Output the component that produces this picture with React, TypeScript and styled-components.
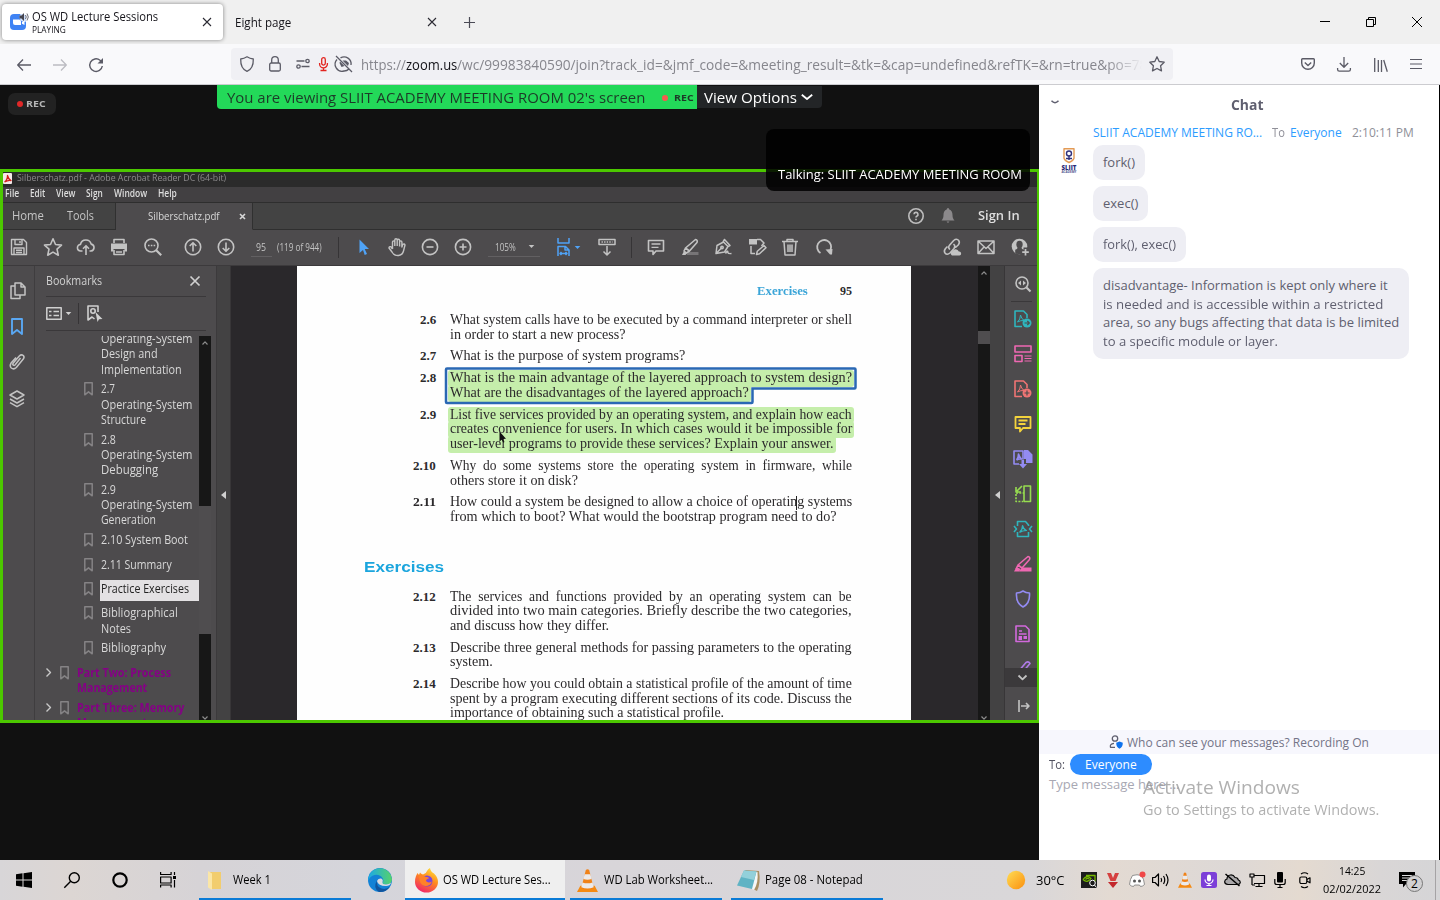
import React, { useLayoutEffect, useRef, useState } from "react";
import styled, { createGlobalStyle } from "styled-components";

const Global = createGlobalStyle`
  * { box-sizing: border-box; }
  html, body { margin: 0; padding: 0; overflow: hidden; }
  body { font-family: "Open Sans", "Noto Sans", sans-serif; background: #111; }
  svg { display: block; flex: none; overflow: visible; }
`;

/* ---------- text that is condensed or extended to a set width ---------- */

const FitBox = styled.span<{ $w: number; $ml?: number }>`
  display: block;
  flex: none;
  width: ${(p) => p.$w}px;
  margin-left: ${(p) => p.$ml ?? 0}px;
  white-space: nowrap;
`;
const FitInner = styled.span`
  display: inline-block;
  transform-origin: 0 50%;
  white-space: pre;
`;

function Fit({ w, ml, children, className }: { w: number; ml?: number; children: React.ReactNode; className?: string }) {
  const ref = useRef<HTMLSpanElement>(null);
  const [k, setK] = useState(1);
  useLayoutEffect(() => {
    if (ref.current) setK(w / ref.current.offsetWidth);
  }, [w]);
  return (
    <FitBox $w={w} $ml={ml} className={className}>
      <FitInner ref={ref} style={{ transform: `scaleX(${k})` }}>{children}</FitInner>
    </FitBox>
  );
}

const Text = styled(Fit)<{ $s?: number; $c?: string; $b?: number; $lh?: number; $mt?: number }>`
  font-size: ${(p) => p.$s ?? 12}px;
  color: ${(p) => p.$c ?? "inherit"};
  font-weight: ${(p) => p.$b ?? 400};
  line-height: ${(p) => p.$lh ?? 16}px;
  margin-top: ${(p) => p.$mt ?? 0}px;
`;

/* ---------- icon frame ---------- */

const Svg = styled.svg<{ $ml?: number; $mt?: number }>`
  margin-left: ${(p) => p.$ml ?? 0}px;
  margin-top: ${(p) => p.$mt ?? 0}px;
  fill: none;
  stroke: currentColor;
  stroke-linejoin: round;
`;

type IconProps = { w?: number; h?: number; vb?: string; ml?: number; mt?: number; sw?: number; color?: string; children: React.ReactNode };
function Icon({ w = 18, h, vb, ml, mt, sw = 1.6, color, children }: IconProps) {
  const hh = h ?? w;
  return (
    <Svg width={w} height={hh} viewBox={vb ?? `0 0 ${w} ${hh}`} $ml={ml} $mt={mt} strokeWidth={sw} color={color}>
      {children}
    </Svg>
  );
}
const solid = { fill: "currentColor", stroke: "none" };

/* ---------- browser ---------- */

const Page = styled.div`
  width: 1440px;
  height: 900px;
  display: flex;
  flex-direction: column;
`;
const TabStrip = styled.div`
  height: 44px;
  flex: none;
  display: flex;
  align-items: center;
  background: #f0f0f0;
  color: #15141a;
`;
const ActiveTab = styled.div`
  width: 221px;
  height: 36px;
  margin-left: 2px;
  padding: 0 12px 0 8px;
  display: flex;
  align-items: center;
  background: #fff;
  border-radius: 4px;
  box-shadow: 0 0 4px rgba(0, 0, 0, 0.45);
`;
const TabTitles = styled.div`
  margin-left: 2px;
  padding-top: 2px;
  flex: 1;
`;
const OtherTab = styled.div`
  width: 223px;
  padding: 0 10px 0 12px;
  display: flex;
  align-items: center;
  justify-content: space-between;
`;
const NewTab = styled.div`
  margin-left: 18px;
  padding-top: 1px;
`;
const WindowButtons = styled.div`
  margin-left: auto;
  padding-right: 18px;
  display: flex;
  align-items: center;
  gap: 36px;
`;
const NavBar = styled.div`
  height: 41px;
  flex: none;
  display: flex;
  align-items: center;
  background: #f9f9fb;
  border-bottom: 1px solid #ccccd0;
  color: #5b5b66;
`;
const UrlBar = styled.div`
  width: 942px;
  height: 32px;
  margin-left: 128px;
  display: flex;
  align-items: center;
  background: #f0f0f4;
  border-radius: 4px;
`;
const UrlText = styled.div`
  width: 781px;
  height: 22px;
  margin-left: 9px;
  padding-top: 2px;
  display: flex;
  overflow: hidden;
  mask-image: linear-gradient(to right, #000 745px, transparent 781px);
`;

const TabClose = ({ c = "#2b2a33" }: { c?: string }) => (
  <Icon w={8} color={c} sw={1.1}><path d="M0 0l8 8M8 0l-8 8" /></Icon>
);

function Browser() {
  return (
    <>
      <TabStrip>
        <ActiveTab>
          <Icon w={20} h={18} sw={0}>
            <rect x="0" y="1" width="16" height="16" rx="4" fill="#3f83f4" />
            <path d="M3 6.500h6a2 2 0 0 1 2 2v3.500H5a2 2 0 0 1-2-2zM12 9l2.500-1.500v4.500L12 10.700z" fill="#fff" />
            <circle cx="14.500" cy="4" r="5" fill="#fff" opacity=".75" />
            <path d="M9.500 2.500h2L14 0v8l-2.500-2.500h-2z" fill="#45454f" />
            <path d="M15.500 2q1.500 2 0 4M17 .5q2.600 3.500 0 7" stroke="#6b6b76" strokeWidth="1" />
          </Icon>
          <TabTitles>
            <Text w={126} $s={12} $lh={14}>OS WD Lecture Sessions</Text>
            <Text w={34} $s={8.8} $lh={13}>PLAYING</Text>
          </TabTitles>
          <TabClose />
        </ActiveTab>
        <OtherTab>
          <Text w={56} $s={12} $mt={2}>Eight page</Text>
          <TabClose />
        </OtherTab>
        <NewTab><Icon w={11} color="#4a4a55" sw={1.2}><path d="M5.500 0v11M0 5.500h11" /></Icon></NewTab>
        <WindowButtons>
          <Icon w={10} sw={1} color="#000"><path d="M0 4.500h10" /></Icon>
          <Icon w={10} sw={1} color="#000"><path d="M.5 2.500h7v7h-7zM2.500 2.500v-2h7v7h-2" /></Icon>
          <Icon w={10} sw={1} color="#000"><path d="M0 0l10 10M10 0L0 10" /></Icon>
        </WindowButtons>
      </TabStrip>
      <NavBar>
        <Icon w={14} h={12} ml={17} mt={1} sw={1.3}><path d="M14 6H.8M6 .5L.7 6 6 11.500" /></Icon>
        <Icon w={14} h={12} ml={22} mt={1} sw={1.3} color="#bcbcc2"><path d="M0 6h13.200M8 .5L13.300 6 8 11.500" /></Icon>
        <Icon w={14} h={14} ml={22} mt={1} sw={1.4}>
          <path d="M13.300 8A6.300 6.300 0 1 1 11 2.200l1 .8" /><path d="M14 0v5.500H8.500z" {...solid} />
        </Icon>
        <UrlBar>
          <Icon w={14} h={16} ml={9} sw={1.3}><path d="M7 .8c2 1.300 4 2 6.300 2.200C13.500 9.500 11.500 13.500 7 15.300 2.500 13.500.5 9.500.7 3 3 2.800 5 2.100 7 .8z" /></Icon>
          <Icon w={12} h={16} ml={15} sw={1.3}><rect x=".7" y="7" width="10.600" height="8" rx="1.500" /><path d="M2.700 7V4a3.300 3.300 0 0 1 6.600 0v3" /></Icon>
          <Icon w={14} h={10} ml={15} sw={1.3}><circle cx="11.500" cy="2" r="1.700" /><circle cx="2.500" cy="7.500" r="1.700" /><path d="M.5 2h8M5.500 7.500h8" /></Icon>
          <Icon w={9} h={14} ml={9} sw={1.3} color="#e2231e">
            <rect x="2.700" y=".6" width="3.600" height="7.500" rx="1.800" /><path d="M.6 6v1a3.900 3.900 0 0 0 7.800 0V6M4.500 11v2.500M1.500 13.500h6" />
          </Icon>
          <Icon w={16} h={16} ml={8} sw={1.3}>
            <path d="M1 3.500A7 7 0 0 0 8 15a7 7 0 0 0 5-2M15 9A7 7 0 0 0 4.500 1.900" /><path d="M0 0l16 16" />
            <path d="M3.500 7l2 4 3-1-4.500-4.500zM6.500 4.500L12 10l1-3-3-2.500z" {...solid} />
          </Icon>
          <UrlText>
            <Text w={45} $s={14} $lh={20} $c="#86868d">https://</Text>
            <Text w={51} $s={14} $lh={20} $c="#15141a">zoom.us</Text>
            <Text w={690} $s={14} $lh={20} $c="#86868d">/wc/99983840590/join?track_id=&amp;jmf_code=&amp;meeting_result=&amp;tk=&amp;cap=undefined&amp;refTK=&amp;rn=true&amp;po=78</Text>
          </UrlText>
          <Icon w={16} h={16} ml={7} sw={1.3}><path d="M8 .8l2.200 4.700 5 .7-3.600 3.600.9 5.100L8 12.500l-4.500 2.400.9-5.100L.8 6.200l5-.7z" /></Icon>
        </UrlBar>
        <Icon w={14} h={13} ml={128} sw={1.4}><path d="M1.500.7h11c.5 0 .8.300.8.800V5a6.300 6.300 0 0 1-12.600 0V1.500c0-.5.300-.8.800-.8z" /><path d="M3.800 4.500L7 7.500l3.200-3" /></Icon>
        <Icon w={14} h={15} ml={22} sw={1.3}><path d="M7 0v10M2.800 6L7 10.200 11.200 6M.6 11v1.500c0 1 .6 1.700 1.700 1.700h9.400c1 0 1.700-.7 1.700-1.700V11" /></Icon>
        <Icon w={14} h={14} ml={23} mt={1} sw={1.3}><path d="M.7 0v14M4.300 2v12M7.500 2v12M9.700 2l3.600 11.700" /></Icon>
        <Icon w={12} h={11} ml={22} sw={1.2}><path d="M0 .5h12M0 5h12M0 9.500h12" /></Icon>
      </NavBar>
    </>
  );
}

/* ---------- meeting stage ---------- */

const Main = styled.div`
  height: 775px;
  display: flex;
  background: #111;
`;
const Stage = styled.div`
  width: 1039px;
  flex: none;
  position: relative;
  display: flex;
  flex-direction: column;
`;
const StageTop = styled.div`
  height: 84px;
  flex: none;
  display: flex;
  align-items: flex-start;
`;
const RecBadge = styled.div`
  width: 48px;
  height: 22px;
  margin: 8px 0 0 8px;
  padding-left: 9px;
  display: flex;
  align-items: center;
  background: #222;
  border-radius: 7px;
`;
const Dot = styled.span<{ $s: number; $c: string; $ml?: number }>`
  width: ${(p) => p.$s}px;
  height: ${(p) => p.$s}px;
  margin-left: ${(p) => p.$ml ?? 0}px;
  border-radius: 50%;
  background: ${(p) => p.$c};
`;
const Banner = styled.div`
  width: 480px;
  height: 24px;
  margin-left: 161px;
  padding: 1px 0 0 10px;
  display: flex;
  align-items: center;
  background: #23d959;
  border-radius: 0 0 0 4px;
`;
const ViewOptions = styled.div`
  width: 125px;
  height: 22px;
  margin-top: 1px;
  padding: 1px 0 0 7px;
  display: flex;
  align-items: center;
  background: #232527;
  border-radius: 0 0 4px 0;
`;
const Talking = styled.div`
  position: absolute;
  left: 766px;
  top: 44px;
  width: 264px;
  height: 62px;
  padding: 0 0 7px 12px;
  display: flex;
  align-items: flex-end;
  background: rgba(0, 0, 0, 0.85);
  border-radius: 8px;
`;
const Share = styled.div`
  height: 554px;
  flex: none;
  display: flex;
  flex-direction: column;
  border: solid #4cc800;
  border-width: 3px 2px 3px 3px;
  background: #4d4b4d;
  color: #d8d8d8;
`;
const TitleBar = styled.div`
  height: 15px;
  flex: none;
  padding-bottom: 3px;
  display: flex;
  align-items: center;
  background: #2b2b2b;
`;
const MenuBar = styled.div`
  height: 16px;
  flex: none;
  padding-bottom: 1px;
  display: flex;
  align-items: center;
  background: #424042;
  border-bottom: 1px solid #2e2e2e;
`;
const DocTabs = styled.div`
  height: 27px;
  flex: none;
  display: flex;
  align-items: stretch;
  background: #434343;
`;
const TabCell = styled.div<{ $w?: number; $on?: boolean }>`
  width: ${(p) => p.$w}px;
  flex: none;
  display: flex;
  align-items: center;
  background: ${(p) => (p.$on ? "#4d4b4d" : "transparent")};
  border-bottom: 1px solid ${(p) => (p.$on ? "#4d4b4d" : "#2f2f2f")};
  border-right: 1px solid #303030;
`;
const TabsEnd = styled.div`
  flex: 1;
  padding-right: 17px;
  display: flex;
  align-items: center;
  justify-content: flex-end;
  border-bottom: 1px solid #2f2f2f;
`;
const ToolRow = styled.div`
  height: 36px;
  flex: none;
  padding: 0 8px 1px 0;
  display: flex;
  align-items: center;
  border-bottom: 1px solid #3c3a3c;
  color: #c3c3c3;
`;
const Field = styled.div<{ $w: number }>`
  width: ${(p) => p.$w}px;
  height: 20px;
  margin-left: 16px;
  padding-left: 5px;
  display: flex;
  align-items: center;
  border-bottom: 1px solid #626062;
`;
const VLine = styled.div<{ $ml: number; $h?: number }>`
  width: 1px;
  height: ${(p) => p.$h ?? 21}px;
  margin-left: ${(p) => p.$ml}px;
  background: #363436;
`;
const Gap = styled.div`
  flex: 1;
`;
const Body = styled.div`
  flex: 1;
  min-height: 0;
  display: flex;
`;
const LeftRail = styled.div`
  width: 32px;
  flex: none;
  display: flex;
  flex-direction: column;
  border-right: 1px solid #3f3d3f;
  color: #c3c3c3;
`;
const Panel = styled.div`
  width: 182px;
  flex: none;
  display: flex;
  flex-direction: column;
  border-right: 1px solid #3c3a3c;
`;
const PanelHead = styled.div<{ $h: number }>`
  height: ${(p) => p.$h}px;
  flex: none;
  width: 160px;
  margin-left: 11px;
  display: flex;
  align-items: center;
  border-bottom: 1px solid #3a383a;
  color: #d0d0d0;
`;
const PanelBody = styled.div`
  flex: 1;
  min-height: 0;
  margin-top: 5px;
  display: flex;
`;
const Tree = styled.div`
  width: 164px;
  flex: none;
  overflow: hidden;
  display: flex;
  flex-direction: column;
`;
const TreeList = styled.div`
  margin-top: -5px;
  display: flex;
  flex-direction: column;
  gap: 4.4px;
`;
const Node = styled.div<{ $indent: number }>`
  flex: none;
  min-height: 20px;
  padding-left: ${(p) => p.$indent}px;
  display: flex;
  align-items: flex-start;
`;
const NodeLines = styled.div<{ $sel?: boolean; $ml: number }>`
  margin-left: ${(p) => p.$ml}px;
  ${(p) =>
    p.$sel &&
    `background: #e3e1e3; color: #222; height: 21px; margin-top: -1px; margin-bottom: -1px; padding-top: 1px;
     flex: 1; box-shadow: -1px 0 #e3e1e3;`}
`;
const Scroll = styled.div<{ $w: number }>`
  width: ${(p) => p.$w}px;
  flex: none;
  display: flex;
  flex-direction: column;
  align-items: center;
  background: #171717;
  color: #8c8c8c;
`;
const Thumb = styled.div<{ $mt: number; $h: number }>`
  width: 100%;
  height: ${(p) => p.$h}px;
  margin-top: ${(p) => p.$mt}px;
  margin-bottom: auto;
  background: #4f4d4f;
`;
const Strip = styled.div<{ $w: number }>`
  width: ${(p) => p.$w}px;
  flex: none;
  padding-top: 3px;
  display: flex;
  align-items: center;
  justify-content: center;
  background: #434243;
  border-right: 1px solid #383638;
`;
const Canvas = styled.div`
  flex: 1;
  display: flex;
  padding-left: 66px;
  background: #2a282b;
`;
const Paper = styled.div`
  position: relative;
  width: 614px;
  flex: none;
  overflow: hidden;
  background: #fefefe;
  color: #2c2a2c;
  font-family: "Liberation Serif", serif;
`;
const RunningHead = styled.div`
  height: 47px;
  padding: 3px 59px 0 460px;
  display: flex;
  align-items: center;
  justify-content: space-between;
`;
const Exercises = styled.div`
  display: flex;
  flex-direction: column;
  gap: 7.3px;
`;
const Exercise = styled.div`
  flex: none;
  display: flex;
`;
const Num = styled.div`
  width: 139px;
  margin-right: 14px;
  display: flex;
  justify-content: flex-end;
`;
const Line = styled.div<{ $w: number; $hl?: boolean }>`
  width: ${(p) => p.$w}px;
  border-radius: 2px;
  background: ${(p) => (p.$hl ? "#c5eeab" : "none")};
  box-shadow: ${(p) => (p.$hl ? "-1px 0 0 1px #c5eeab, 1px 0 0 1px #c5eeab" : "none")};
`;
const Lines = styled.div`
  position: relative;
`;
const SectionTitle = styled.div`
  padding: 33px 0 14px 67px;
  font-family: "Liberation Sans", sans-serif;
`;
const Overlay = styled.svg<{ $x: number; $y: number }>`
  position: absolute;
  left: ${(p) => p.$x}px;
  top: ${(p) => p.$y}px;
`;
const RightRail = styled.div`
  width: 32px;
  flex: none;
  display: flex;
  flex-direction: column;
  color: #c3c3c3;
`;
const RailTools = styled.div`
  height: 402px;
  flex: none;
  overflow: hidden;
  display: flex;
  flex-direction: column;
  align-items: center;
`;
const RailCell = styled.div<{ $h: number; $dark?: boolean }>`
  width: 100%;
  height: ${(p) => p.$h}px;
  flex: none;
  display: flex;
  align-items: center;
  justify-content: center;
  padding-left: 3px;
  background: ${(p) => (p.$dark ? "#3b393b" : "none")};
`;
const RailRule = styled.div`
  width: 21px;
  height: 1px;
  flex: none;
  background: #3a383a;
`;

const Mark = ({ ml = 0 }: { ml?: number }) => (
  <Icon w={9} h={14} ml={ml} mt={1} sw={1.5} color="#858385"><path d="M.8.8h7.400v12L4.500 9.800.8 12.800z" /></Icon>
);
const Caret = ({ ml, c = "currentColor" }: { ml: number; c?: string }) => (
  <Icon w={5} h={3} ml={ml} color={c}><path d="M-.3 0h5.600L2.500 3z" {...solid} /></Icon>
);
const ScrollArrow = ({ up }: { up?: boolean }) => (
  <Icon w={6} h={4} sw={1.2} mt={up ? 5 : -4}><path d={up ? "M.5 3.500L3 .8l2.500 2.700" : "M.5 .5L3 3.200 5.500 .5"} /></Icon>
);
const Collapse = () => <Icon w={5} h={8} color="#d0d0d0"><path d="M5 0v8L0 4z" {...solid} /></Icon>;

type Entry = { lines: [string, number][]; sel?: boolean };
const chapters: Entry[] = [
  { lines: [["2.7", 14], ["Operating-System", 91], ["Structure", 45]] },
  { lines: [["2.8", 15], ["Operating-System", 91], ["Debugging", 57]] },
  { lines: [["2.9", 15], ["Operating-System", 91], ["Generation", 55]] },
  { lines: [["2.10 System Boot", 87]] },
  { lines: [["2.11 Summary", 71]] },
  { lines: [["Practice Exercises", 88]], sel: true },
  { lines: [["Bibliographical", 77], ["Notes", 30]] },
  { lines: [["Bibliography", 65]] },
];
const parts: Entry[] = [
  { lines: [["Part Two: Process", 94], ["Management", 70]] },
  { lines: [["Part Three: Memory", 107], ["Management", 70]] },
];

type Question = { n: string; nw: number; lines: [string, number][]; hl?: boolean };
const first: Question[] = [
  { n: "2.6", nw: 16, lines: [["What system calls have to be executed by a command interpreter or shell", 402], ["in order to start a new process?", 176]] },
  { n: "2.7", nw: 16, lines: [["What is the purpose of system programs?", 235]] },
  { n: "2.8", nw: 16, hl: true, lines: [["What is the main advantage of the layered approach to system design?", 402], ["What are the disadvantages of the layered approach?", 299]] },
  { n: "2.9", nw: 16, hl: true, lines: [["List five services provided by an operating system, and explain how each", 402], ["creates convenience for users. In which cases would it be impossible for", 402], ["user-level programs to provide these services? Explain your answer.", 384]] },
  { n: "2.10", nw: 23, lines: [["Why  do  some  systems  store  the  operating  system  in  firmware,  while", 402], ["others store it on disk?", 128]] },
  { n: "2.11", nw: 23, lines: [["How could a system be designed to allow a choice of operating systems", 402], ["from which to boot? What would the bootstrap program need to do?", 387]] },
];
const second: Question[] = [
  { n: "2.12", nw: 23, lines: [["The  services  and  functions  provided  by  an  operating  system  can  be", 402], ["divided into two main categories. Briefly describe the two categories,", 402], ["and discuss how they differ.", 159]] },
  { n: "2.13", nw: 23, lines: [["Describe three general methods for passing parameters to the operating", 402], ["system.", 43]] },
  { n: "2.14", nw: 23, lines: [["Describe how you could obtain a statistical profile of the amount of time", 402], ["spent by a program executing different sections of its code. Discuss the", 402], ["importance of obtaining such a statistical profile.", 274]] },
];

const Questions = ({ list }: { list: Question[] }) => (
  <Exercises>
    {list.map((q) => (
      <Exercise key={q.n}>
        <Num><Text w={q.nw} $s={13} $b={700} $lh={14.6}>{q.n}</Text></Num>
        <Lines>
          {q.lines.map(([t, w]) => (
            <Line key={t} $w={w} $hl={q.hl}><Text w={w} $s={13.8} $lh={14.6}>{t}</Text></Line>
          ))}
        </Lines>
      </Exercise>
    ))}
  </Exercises>
);

const PdfGlyph = () => (
  <>
    <path d="M8 16.500H1V1h8.500L13 4.500V8" /><path d="M3.500 12q3-2.500 3-7 1 4.500 4 5.500-4-.3-7 1.500" strokeWidth="1" />
  </>
);

function BookmarksPanel() {
  return (
    <Panel>
      <PanelHead $h={31}>
        <Text w={56} $s={12}>Bookmarks</Text>
        <Icon w={10} ml={88} sw={1.7}><path d="M.5.5l9 9M9.500.5l-9 9" /></Icon>
      </PanelHead>
      <PanelHead $h={34}>
        <Icon w={16} h={13} sw={1.5}>
          <rect x=".8" y=".8" width="14.400" height="11.400" /><path d="M3 4.500h2.500M3 8.500h2.500M7.500 4.500H13M7.500 8.500H13" strokeWidth="1.700" />
        </Icon>
        <Caret ml={4} />
        <VLine $ml={7} />
        <Icon w={16} h={17} ml={8} sw={1.6}>
          <path d="M11 7V1H1v14l4-3 2.500 2" /><circle cx="6" cy="6" r="2.200" /><path d="M8.500 7l7 7-3.500.3L10.500 17z" {...solid} />
        </Icon>
      </PanelHead>
      <PanelBody>
        <Tree>
          <TreeList>
            <Node $indent={48}>
              <NodeLines $ml={18}>
                <Text w={91} $s={12} $lh={15.3}>Operating-System</Text>
                <Text w={57} $s={12} $lh={15.3}>Design and</Text>
                <Text w={81} $s={12} $lh={15.3}>Implementation</Text>
              </NodeLines>
            </Node>
            {chapters.map((e) => (
              <Node key={e.lines[0][0]} $indent={48}>
                <Mark ml={1} />
                <NodeLines $ml={8} $sel={e.sel}>
                  {e.lines.map(([t, w]) => <Text key={t} w={w} $s={12} $lh={15.3}>{t}</Text>)}
                </NodeLines>
              </Node>
            ))}
            {parts.map((e) => (
              <Node key={e.lines[0][0]} $indent={11}>
                <Icon w={5} h={9} mt={3} sw={1.4} color="#c8c8c8"><path d="M.5.5l4 4-4 4" /></Icon>
                <Mark ml={9} />
                <NodeLines $ml={8}>
                  {e.lines.map(([t, w]) => <Text key={t} w={w} $s={11.500} $b={700} $c="#850185" $lh={15.3}>{t}</Text>)}
                </NodeLines>
              </Node>
            ))}
          </TreeList>
        </Tree>
        <Scroll $w={12}>
          <ScrollArrow up />
          <Thumb $mt={161} $h={128} />
          <ScrollArrow />
        </Scroll>
      </PanelBody>
    </Panel>
  );
}

function Reader() {
  return (
    <Share>
      <TitleBar>
        <Icon w={9} h={11} mt={1} sw={0}><rect width="9" height="11" rx="1" fill="#f4e9e9" /><path d="M1.500 9q3-2 3-6.500 1 4 3.500 5-3-.5-6.500 1.500" stroke="#d0201c" strokeWidth="1.300" /></Icon>
        <Text w={209} ml={5} $s={9.800} $lh={14} $c="#8c8a8c">Silberschatz.pdf - Adobe Acrobat Reader DC (64-bit)</Text>
      </TitleBar>
      <MenuBar>
        {([["File", 14, 2], ["Edit", 15, 11], ["View", 19, 11], ["Sign", 17, 11], ["Window", 33, 11], ["Help", 19, 11]] as [string, number, number][]).map(([t, w, ml]) => (
          <Text key={t} w={w} ml={ml} $s={9.800} $b={600} $lh={14} $c="#dedede">{t}</Text>
        ))}
      </MenuBar>
      <DocTabs>
        <TabCell $w={113}>
          <Text w={32} ml={9} $s={12} $c="#c4c4c4">Home</Text>
          <Text w={27} ml={23} $s={12} $c="#c4c4c4">Tools</Text>
        </TabCell>
        <TabCell $w={137} $on>
          <Text w={72} ml={32} $s={11}>Silberschatz.pdf</Text>
          <Icon w={5} ml={20} sw={1.6}><path d="M0 0l5 5M5 0L0 5" /></Icon>
        </TabCell>
        <TabsEnd>
          <Icon w={16} color="#bdbdbd" sw={1.6}>
            <circle cx="8" cy="8" r="7.200" /><path d="M6 6.300a2 2 0 1 1 2.800 1.900c-.6.300-.8.700-.8 1.400M8 10.800v1.500" />
          </Icon>
          <Icon w={14} h={16} ml={17} color="#8b898b"><path d="M7 0q1.200 0 1.300 1.600C10.500 2.500 11.500 4 11.500 7c0 3 .8 4 2 5.500H.5c1.200-1.500 2-2.500 2-5.500 0-3 1-4.500 3.200-5.400Q5.800 0 7 0zM5.500 13.500h3L7 15z" {...solid} /></Icon>
          <Text w={42} ml={23} $s={12} $b={600} $c="#dedede">Sign In</Text>
        </TabsEnd>
      </DocTabs>
      <ToolRow>
        <Icon ml={7} sw={1.4}><path d="M1.500 1.500h12l3 3v12h-15zM5 1.500v5h7v-5M10 3v2M4 16.500V10h10v6.500M6 12.300h6M6 14.500h6" /></Icon>
        <Icon ml={16}><path d="M9 .8l2.500 5.700 6 .6-4.500 4.100 1.300 6L9 14.100l-5.300 3.100 1.300-6L.5 7.100l6-.6z" /></Icon>
        <Icon ml={15}><path d="M5.500 13H4a3.300 3.300 0 0 1-.5-6.600 5.500 5.500 0 0 1 10.700-.3A3.500 3.500 0 0 1 14 13h-1.500M9 17V8M6 10.700L9 7.700l3 3" /></Icon>
        <Icon ml={15}>
          <path d="M4 5V1.500h10V5M4 12v4.500h10V12M6 14h6" /><path d="M1 5.500h16v8h-2.500V11h-11v2.500H1z" {...solid} />
        </Icon>
        <Icon ml={16}><circle cx="7.500" cy="7.500" r="6.500" /><path d="M12.200 12.200l5 5" strokeWidth="2.200" /><path d="M4 7.500h7.500" strokeWidth="1.600" strokeDasharray="1.600 1.200" /></Icon>
        <Icon ml={22}><circle cx="9" cy="9" r="7.700" /><path d="M9 13.500V5M5.700 8L9 4.700 12.300 8" /></Icon>
        <Icon ml={15}><circle cx="9" cy="9" r="7.700" /><path d="M9 4.500V13M5.700 10L9 13.300 12.300 10" /></Icon>
        <Field $w={21}><Text w={10} $s={10.500}>95</Text></Field>
        <Text w={45} ml={5} $s={10.500}>(119 of 944)</Text>
        <VLine $ml={16} />
        <Icon ml={16} color="#4fa3f7"><path d="M4.500 1.500l9.500 9.500h-4.300l2.300 5-2.300 1L8 12l-3.500 3z" {...solid} /></Icon>
        <Icon ml={15} sw={1.4}>
          <path d="M4.500 11V4a1.100 1.100 0 0 1 2.300 0v4M6.800 8V2a1.100 1.100 0 0 1 2.400 0v6M9.200 8V2.500a1.100 1.100 0 0 1 2.400 0V8.500M11.600 8.500V4a1.100 1.100 0 0 1 2.300 0v5l.8-2.500q1.800-1.200 2.300.5l-1.500 6q-1 4-5 4.500-4.500.3-6.500-3.500L1 10q0-1.700 1.800-1.300l1.700 2.300" />
        </Icon>
        <Icon ml={15}><circle cx="9" cy="9" r="7.600" /><path d="M5.500 9h7" /></Icon>
        <Icon ml={15}><circle cx="9" cy="9" r="7.600" /><path d="M5.500 9h7M9 5.500v7" /></Icon>
        <Field $w={52}><Text w={21} ml={2} $s={10.500}>105%</Text><Caret ml={13} /></Field>
        <Icon ml={15} color="#4fa3f7" sw={1.5}>
          <path d="M3 0v5h11V0M3 18V8.500h7.500L14 12v6M10 8.500V12h4M5 15.500h7M6.500 14L5 15.500 6.500 17M10.500 14l1.500 1.500-1.500 1.500" />
        </Icon>
        <Caret ml={2} c="#4fa3f7" />
        <Icon ml={18} sw={1.5}><rect x="1" y="1.500" width="16" height="5" /><path d="M3.500 4h11" strokeDasharray="1.400 1.200" /><path d="M9 8v9M5.500 13.500L9 17l3.500-3.500" /></Icon>
        <VLine $ml={15} />
        <Icon ml={15}><path d="M1.500 2.500h15v10.500H9L6 16.500V13H1.500z" /><path d="M4.500 6h9M4.500 9.300h7" strokeWidth="1.300" /></Icon>
        <Icon ml={16}><path d="M8 14h9.500v3H5.500z" fill="#777577" stroke="none" /><path d="M14.500 1.500q2.500.5 1.500 3L8.500 13l-4-3zM4.500 10l-1.500 3 2.500 2 3-2" /><path d="M3 13l3 2-1.500 2H1z" {...solid} /></Icon>
        <Icon ml={15} sw={1.5}><path d="M2 15.500l1-8L9.500 4l4.500 4.500-3.500 5.500zM2 15.500l6-6M9 4l1.500-2.500L16 7.500 14 8.500M11.500 15.500q2.500-4 2.300-1 .5 1.500 3.700 1" /><circle cx="8" cy="9.500" r="1.200" /></Icon>
        <Icon ml={16} sw={1.5}><path d="M3 8v7.500h4M9 1.500h3.500L16 5l-2.500 3" /><path d="M1 1h8v5.500H1z" {...solid} /><path d="M8.500 16.500l.8-3.300L16 7.500l2 2.200-6.500 6z" /></Icon>
        <Icon ml={15} sw={1.5}><path d="M1 3.500h16M6 3.500v-2h6v2M3 3.500l1 13.500h10l1-13.500M7 6.500v7.500M9 6.500v7.500M11 6.500v7.500" /></Icon>
        <Icon ml={16} sw={1.8}><path d="M5.500 15A7 7 0 1 1 15.500 12" /><path d="M10.500 11.500l7-.5-.5 5.500h-2z" {...solid} /></Icon>
        <Gap />
        <Icon sw={1.6}>
          <path d="M7 11.500q-2.500-2-.3-4.500l4-4.500q3-2.500 5 0 1.500 2-.5 4.500L12.500 9.500M10.500 6q2.500 2 .5 4.500l-4 4.500q-3 2.500-5 0-1.500-2 .5-4.500l2-2" />
          <path d="M9 17.500a2.500 2.500 0 0 1 .5-4.500 3.500 3.500 0 0 1 6.300.5 2 2 0 0 1 .7 4z" {...solid} />
        </Icon>
        <Icon ml={16} sw={1.5}><path d="M1 3h16v12.500H1zM1 3l8 7.500L17 3M1 15.500l6-6.500M17 15.500L11 9" /></Icon>
        <Icon ml={16}>
          <circle cx="8.500" cy="8.500" r="7.800" {...solid} />
          <path d="M8.500 2.800q3.200 0 3.200 3.700 0 2-1.200 3.200 0 1.300 2.300 2v3.500q-4.300 2.300-8.600 0v-3.500q2.300-.7 2.300-2-1.200-1.200-1.200-3.200 0-3.700 3.200-3.700z" fill="#4d4b4d" stroke="none" />
          <path d="M14.500 9.500v8.500M10 14h8.500" stroke="#4d4b4d" strokeWidth="4" /><path d="M14.500 11v6.500M11.200 14.200h6.600" strokeWidth="1.700" />
        </Icon>
      </ToolRow>
      <Body>
        <LeftRail>
          <Icon w={16} h={18} ml={7} mt={16} sw={1.5}><path d="M5 1h6l4 4v8H5zM11 1v4h4M5 4H1v12.500h9V13" /></Icon>
          <Icon w={12} h={17} ml={8} mt={18} sw={1.900} color="#5aa7f2"><path d="M1 1h10v15l-5-4-5 4z" /></Icon>
          <Icon w={16} h={18} ml={6} mt={18} sw={1.5}>
            <path d="M11.500 5L6 12q-1.300 1-2.200-.5 0-1 .5-1.500l6-7q2-2 4-.5 1.500 1.700 0 3.500l-7 8.500q-2.500 2.500-5 .5-2-2-.2-5L7 4.500" />
          </Icon>
          <Icon w={16} h={18} ml={6} mt={19} sw={1.5}><path d="M8 1l7 4-7 4-7-4zM1 9l7 4 7-4M1 12.700l7 4 7-4" /></Icon>
        </LeftRail>
        <BookmarksPanel />
        <Strip $w={14}><Collapse /></Strip>
        <Canvas>
          <Paper>
            <RunningHead>
              <Text w={51} $s={12.500} $b={700} $c="#3ba5d8">Exercises</Text>
              <Text w={12} $s={12} $b={700}>95</Text>
            </RunningHead>
            <Questions list={first} />
            <SectionTitle><Text w={80} $s={15} $b={700} $c="#1ba5dd" $lh={18}>Exercises</Text></SectionTitle>
            <Questions list={second} />
            <Overlay $x={148} $y={101} width="412" height="38" fill="none" stroke="#2a68b4" strokeWidth="2.500">
              <path d="M2 1.500H409.500Q410.500 1.500 410.500 2.500V20.500Q410.500 21.500 409.500 21.500H307.500V35Q307.500 36 306.500 36H2Q1 36 1 35V2.500Q1 1.500 2 1.500z" />
            </Overlay>
            <Overlay $x={202} $y={165} width="8" height="12"><path d="M.5.5v10l2.200-1.800 1.500 3 1.300-.6-1.500-3 3-.3z" fill="#111" /></Overlay>
            <Overlay $x={499} $y={230} width="2" height="15"><path d="M.5 0v14" stroke="#222" /></Overlay>
          </Paper>
        </Canvas>
        <Scroll $w={12}>
          <ScrollArrow up />
          <Thumb $mt={56} $h={13} />
          <ScrollArrow />
        </Scroll>
        <Strip $w={15}><Collapse /></Strip>
        <RightRail>
          <RailTools>
            <RailCell $h={35}><Icon w={16} sw={1.6}><circle cx="7" cy="7" r="6" /><path d="M11.500 11.500l4 4" strokeWidth="2.200" /><path d="M6 4.500v5L3 7zM8 4.500v5L11 7z" {...solid} /></Icon></RailCell>
            <RailRule />
            <RailCell $h={34}><Icon w={18} color="#2fb5bd"><PdfGlyph /><circle cx="13" cy="13" r="4.500" {...solid} /><path d="M10.500 13h4.500M13.300 11l2 2-2 2" stroke="#4d4b4d" strokeWidth="1.200" /></Icon></RailCell>
            <RailCell $h={35}><Icon w={18} color="#ee68b2"><path d="M1 1h16v6H1zM1 10.500h7v6H1z" /><path d="M10.500 11h7M10.500 13.500h7M10.500 16h7" strokeWidth="1" /></Icon></RailCell>
            <RailCell $h={35}><Icon w={18} color="#ef7474"><PdfGlyph /><circle cx="13" cy="13" r="4.500" {...solid} /><path d="M13 10.500v5M10.500 13h5" stroke="#4d4b4d" strokeWidth="1.200" /></Icon></RailCell>
            <RailCell $h={35}><Icon w={18} color="#f3d33c" sw={1.8}><path d="M1.500 2h15v11H9L6 16.500V13H1.500z" /><path d="M4.500 5.500h9M4.500 9h7" /></Icon></RailCell>
            <RailCell $h={35}><Icon w={18} color="#938bf2"><path d="M5 14H0V1h9v8M2.500 10q2-2 2-6 .7 3 3 5-3-.5-5 1" /><path d="M10 0h4l4.500 4.500V13H12V9h-2zM7.500 9.500h2.500V14h3l-4 4.500-4-4.500h2.500z" {...solid} /></Icon></RailCell>
            <RailCell $h={35}><Icon w={18} color="#97dc50"><path d="M10 1h6.500v15.500H10z" /><path d="M2 9v7.500h7M2 8h8" strokeDasharray="2 1.300" /><path d="M8 1L3 6M2 2v5h5" /></Icon></RailCell>
            <RailCell $h={35}><Icon w={18} color="#2fb5bd"><path d="M3.500 6V1.500h8L14.500 5v1M3.500 12v4.500h11V12M0 6l2.500 3L0 12M18 6l-2.500 3L18 12" /><path d="M5.500 12.500q3-2.500 3-7 1 4 4 5-4 0-7 2" strokeWidth="1.200" /></Icon></RailCell>
            <RailCell $h={35}><Icon w={18} color="#ee68b2"><path d="M14 1.500q2.500.5 1.500 3L8 13l-4-3zM4 10l-2 4" /><path d="M2.500 12l4 2L5 16.500H0zM8 12.500h9.500v4H5z" {...solid} /></Icon></RailCell>
            <RailCell $h={35}><Icon w={18} color="#938bf2"><path d="M9 1c2 1.500 4.500 2 6.500 2 .5 7-1.500 11.500-6.500 14C4 14.500 2 10 2.500 3 4.500 3 7 2.500 9 1z" /></Icon></RailCell>
            <RailCell $h={35}><Icon w={18} color="#d269dc"><path d="M3 1h8.500L15 4.500V16.500H2V1zM5 6h3M5 9h7.500" /><path d="M4.500 11h3.500v4H4.500zM9.500 11H13v3H9.500z" {...solid} /></Icon></RailCell>
            <RailCell $h={35}><Icon w={18} color="#b07be8"><path d="M4 12l8-9.500q2.500-1.500 4 1L8 13z" /></Icon></RailCell>
          </RailTools>
          <RailCell $h={19} $dark><Icon w={9} h={5} sw={1.8}><path d="M.5.5l4 3.800 4-3.800" /></Icon></RailCell>
          <RailCell $h={37}><Icon w={12} h={12} ml={3} sw={1.6}><path d="M1 0v12M3 6h8M8 3l3 3-3 3" /></Icon></RailCell>
        </RightRail>
      </Body>
    </Share>
  );
}

/* ---------- chat ---------- */

const Chat = styled.div`
  width: 400px;
  flex: none;
  position: relative;
  display: flex;
  flex-direction: column;
  background: #fff;
  color: #5f5f6f;
`;
const ChatHead = styled.div`
  height: 39px;
  display: flex;
  align-items: center;
`;
const Meta = styled.div`
  height: 18px;
  padding-left: 54px;
  display: flex;
  align-items: center;
`;
const Thread = styled.div`
  flex: 1;
  padding: 3px 0 0 22px;
  display: flex;
  align-items: flex-start;
`;
const Bubbles = styled.div`
  margin-left: 16px;
  display: flex;
  flex-direction: column;
  align-items: flex-start;
  gap: 6px;
`;
const Bubble = styled.div<{ $w: number }>`
  width: ${(p) => p.$w}px;
  padding: 8px 10px 8.400px;
  background: #eeeef4;
  border-radius: 10px;
`;
const Notice = styled.div`
  height: 24px;
  padding: 2px 0 0 70px;
  display: flex;
  align-items: center;
  background: #f7f7fd;
`;
const ToRow = styled.div`
  height: 21px;
  padding-left: 10px;
  display: flex;
  align-items: center;
`;
const Pill = styled.div`
  width: 82px;
  height: 21px;
  margin-left: 5px;
  padding-left: 15px;
  display: flex;
  align-items: center;
  background: #2d8cff;
  border-radius: 11px;
`;
const Compose = styled.div`
  height: 85px;
  padding: 0 0 0 10px;
`;
const Watermark = styled.div`
  position: absolute;
  left: 104px;
  top: 690px;
`;
const Edge = styled.div`
  width: 1px;
  background: #000;
`;

const bubbles: { w: number; lines: [string, number][] }[] = [
  { w: 52, lines: [["fork()", 32]] },
  { w: 55, lines: [["exec()", 35]] },
  { w: 93, lines: [["fork(), exec()", 73]] },
  {
    w: 316,
    lines: [
      ["disadvantage- Information is kept only where it", 285],
      ["is needed and is accessible within a restricted", 280],
      ["area, so any bugs affecting that data is be limited", 296],
      ["to a specific module or layer.", 175],
    ],
  },
];

function ChatPanel() {
  return (
    <Chat>
      <ChatHead>
        <Icon w={8} h={5} ml={12} mt={-5} sw={1.5}><path d="M.5.800Q4 4.500 7.500.800" /></Icon>
        <Text w={33} ml={172} $s={13.500} $b={700} $lh={18}>Chat</Text>
      </ChatHead>
      <Meta>
        <Text w={169} $s={12} $c="#2d9cff">SLIIT ACADEMY MEETING RO...</Text>
        <Text w={13} ml={10} $s={12} $c="#8f8f98">To</Text>
        <Text w={52} ml={5} $s={12} $c="#2d9cff">Everyone</Text>
        <Text w={62} ml={10} $s={12} $c="#8f8f98">2:10:11 PM</Text>
      </Meta>
      <Thread>
        <Icon w={16} h={26} mt={3} sw={1.4}>
          <path d="M3 .7h10v9.500Q12 13 8 14.500 4 13 3 10.200z" stroke="#e39a55" /><circle cx="8" cy="5.500" r="2.500" stroke="#33337c" /><path d="M5 10.500h6M8 8v4" stroke="#33337c" />
          <text x=".5" y="21.500" fontSize="6" fontWeight="800" fill="#2c2c78" stroke="none" textLength="15" lengthAdjust="spacingAndGlyphs">SLIIT</text>
          <text x=".5" y="25" fontSize="3.200" fontWeight="700" fill="#55558f" stroke="none" textLength="15" lengthAdjust="spacingAndGlyphs">ACADEMY</text>
        </Icon>
        <Bubbles>
          {bubbles.map((b) => (
            <Bubble key={b.w} $w={b.w}>
              {b.lines.map(([t, w]) => <Text key={t} w={w} $s={13} $lh={18.600}>{t}</Text>)}
            </Bubble>
          ))}
        </Bubbles>
      </Thread>
      <Notice>
        <Icon w={14} h={14} mt={-2} sw={1.3}>
          <circle cx="6" cy="3.500" r="2.700" /><path d="M6 12.300H1.500Q.5 9 5 8.300" /><path d="M10.500 6.500l3.300 1.300q0 4.500-3.300 6-3.300-1.500-3.300-6z" fill="#0e72ed" stroke="none" />
        </Icon>
        <Text w={242} ml={4} $s={12} $c="#747487">Who can see your messages? Recording On</Text>
      </Notice>
      <ToRow>
        <Text w={16} $s={12} $c="#51515f">To:</Text>
        <Pill><Text w={52} $s={12} $c="#fff">Everyone</Text></Pill>
      </ToRow>
      <Compose><Text w={131} $s={13} $c="#a8a8b3" $lh={18}>Type message here ...</Text></Compose>
      <Watermark>
        <Text w={157} $s={19} $c="rgba(150,150,150,.75)" $lh={24}>Activate Windows</Text>
        <Text w={236} $s={14} $c="rgba(150,150,150,.75)" $lh={22}>Go to Settings to activate Windows.</Text>
      </Watermark>
    </Chat>
  );
}

/* ---------- taskbar ---------- */

const Taskbar = styled.div`
  height: 40px;
  display: flex;
  align-items: center;
  background: linear-gradient(90deg, #d8d6d8 0, #dcd6d3 70px, #d6d3d6 200px, #d5d5db 360px, #d8d5d9 600px, #d9d7d9 1030px, #e3dad2 1110px, #ddd8d6 1230px, #e4dad0 1300px, #d9d6d6 1380px, #d5d5d7 1440px);
  color: #000;
`;
const Task = styled.div<{ $w: number; $ml: number; $on?: boolean }>`
  width: ${(p) => p.$w}px;
  height: 40px;
  margin-left: ${(p) => p.$ml}px;
  display: flex;
  align-items: center;
  background: ${(p) => (p.$on ? "#efefef" : "none")};
  border-bottom: 2px solid #0a7bd6;
  padding-top: 2px;
`;
const Clock = styled.div`
  width: 58px;
  margin-left: 12px;
  display: flex;
  flex-direction: column;
  align-items: center;
`;
const Notify = styled.div`
  position: relative;
  width: 24px;
  height: 24px;
  margin-left: 18px;
`;
const Count = styled.div`
  position: absolute;
  left: 7px;
  top: 7px;
  width: 17px;
  height: 17px;
  display: flex;
  justify-content: center;
  border: 1px solid #777;
  border-radius: 50%;
  background: #d2d1d2;
`;
const ShowDesktop = styled.div`
  width: 5px;
  height: 40px;
  margin-left: auto;
  border-left: 1px solid #a5a3a5;
`;

const Cone = ({ w, h, ml }: { w: number; h: number; ml: number }) => (
  <Icon w={w} h={h} vb="0 0 22 24" ml={ml} sw={0}>
    <path d="M3.500 17.500h15L22 24H0z" fill="#f58a12" />
    <path d="M9.200 1q1.800-1.500 3.600 0l4.700 19q-6.500 3-13 0z" fill="#f08218" />
    <path d="M8 5.500h6l1.300 4.800q-4.300 1.700-8.600 0zM5.700 14q5.300 2 10.600 0l1.200 5q-6.500 3-13 0z" fill="#eceaea" />
  </Icon>
);

function TaskbarRow() {
  return (
    <Taskbar>
      <Icon w={16} ml={16}><path d="M0 2.300L6.500 1.300V7.500H0zM7.500 1.200L16 0v7.500H7.500zM0 8.500h6.500v6.200L0 13.700zM7.500 8.500H16V16l-8.500-1.200z" {...solid} /></Icon>
      <Icon w={16} ml={32} sw={1.400}><circle cx="10.300" cy="5.700" r="5" /><path d="M6.700 9.300L.3 15.700" /></Icon>
      <Icon w={16} ml={32} sw={2.200}><circle cx="8" cy="8" r="6.700" /></Icon>
      <Icon w={16} ml={32} sw={1.200}><path d="M.6 0v2.500h10.500V0M.6 5h10.500v6H.6zM.6 15.500V13h10.500v2.500M14.500 0v3M14.500 8v7.500" /><path d="M13 4h3v3h-3z" {...solid} /></Icon>
      <Task $w={152} $ml={23}>
        <Icon w={14} h={19} ml={9}><path d="M2 1h11v17H2z" fill="#f2cd6e" stroke="none" /><path d="M0 0l4 2.500V19l-4-2.500z" fill="#fbe6a6" stroke="none" /></Icon>
        <Text w={38} ml={11} $s={12}>Week 1</Text>
      </Task>
      <Icon w={24} ml={17} sw={0}>
        <defs><linearGradient id="edge" x1="0" x2="1"><stop offset="0" stopColor="#1ba9e6" /><stop offset="1" stopColor="#56d26b" /></linearGradient></defs>
        <circle cx="12" cy="12" r="12" fill="#1282d6" />
        <path d="M.5 9A12 12 0 0 1 24 11q0 5.500-6 5.500-4 0-3.500-2 1.500-2 .3-4Q12 6 6.500 7 2 8 .2 13z" fill="url(#edge)" />
        <path d="M9 12.500q-1 6 4.500 8 4.500 1.500 8.500-2A12 12 0 0 1 11 24Q4.500 20 9 12.500z" fill="#10559f" />
        <path d="M9 13q1-3 4-2.500 2.500 1 1.500 3.500-.5 2.500 3.500 2.500 3 0 5-1.800-1 3.300-5 3.300Q10 18 9 13z" fill="#dcdce0" />
      </Icon>
      <Task $w={160} $ml={13} $on>
        <Icon w={23} h={24} ml={10} sw={0}>
          <defs><linearGradient id="fox" x1=".8" y1="0" x2=".3" y2="1"><stop offset="0" stopColor="#ffe43a" /><stop offset=".45" stopColor="#ff8a1e" /><stop offset="1" stopColor="#f0246a" /></linearGradient></defs>
          <path d="M1 8l1.500-3L4 7l1-2.500Q6 6 8 6.500 11 6 12 3q1-2 3-3 .5 3.500 4 5.500 4 4 4 8.500a11.500 10.500 0 0 1-23 0Q0 10.500 1 8z" fill="url(#fox)" />
          <circle cx="12" cy="13" r="5.500" fill="#7a45dd" /><path d="M4 8q4-1.500 7 1 3-.5 3 1.500-3 .5-3 2.500 2 2.500 6 .5-2 5-7 4.500Q4 16.500 4 8z" fill="#ff8128" />
        </Icon>
        <Text w={108} ml={5} $s={12}>OS WD Lecture Ses...</Text>
      </Task>
      <Task $w={152} $ml={5}>
        <Cone w={21} h={23} ml={7} />
        <Text w={109} ml={6} $s={12}>WD Lab Worksheet...</Text>
      </Task>
      <Task $w={152} $ml={9}>
        <Icon w={24} h={22} ml={6} sw={0}>
          <path d="M8 1l14 1q2 12-2 20L16 20z" fill="#a98f63" /><path d="M9 2l11.500 1q1 11-3.500 18l-4-2z" fill="#f4f7f7" /><path d="M7 1.500l12.500 1L15 20 0 16.500z" fill="#5fb3c4" /><path d="M7 1.500l12.500 1L17 11 4 8z" fill="#93d0da" />
        </Icon>
        <Text w={98} ml={4} $s={12}>Page 08 - Notepad</Text>
      </Task>
      <Icon w={18} ml={124} sw={0}>
        <defs><linearGradient id="sun" x1="0" y1="0" x2="1" y2="1"><stop offset="0" stopColor="#ffdd55" /><stop offset="1" stopColor="#fb8f0e" /></linearGradient></defs>
        <circle cx="9" cy="9" r="9.200" fill="url(#sun)" />
      </Icon>
      <Text w={29} ml={11} $s={12.500} $mt={2}>30°C</Text>
      <Icon w={16} ml={16} sw={1}><rect width="16" height="16" fill="#1c1c1c" stroke="none" /><path d="M2 7.500q3.500-5 8-1-3.500 5-8 1M4.500 7.500q2-2 3.500-.5M5 3.500h9v6" stroke="#76b900" strokeWidth="1.300" /><circle cx="11.500" cy="11" r="2.800" stroke="#fff" fill="#1c1c1c" /><path d="M13.500 13l2 2.500" stroke="#fff" /></Icon>
      <Icon w={12} h={16} ml={10} sw={0}><path d="M0 1h4l2 5 2-5h4L8.500 9h-5z" fill="#d5403f" /><path d="M1 10h10l-5 6z" fill="#c3282c" /></Icon>
      <Icon w={16} ml={10} sw={0}><path d="M3.500 3.500q4.500-1.500 9 0 2.500 3.500 3 9-2 2-4 2l-1-1.500H5.500l-1 1.500q-2 0-4-2 .5-5.500 3-9z" fill="#fdfdfd" stroke="#777" strokeWidth=".8" /><circle cx="5.500" cy="9" r="1.500" fill="#555" /><circle cx="10.500" cy="9" r="1.500" fill="#555" /><circle cx="13.500" cy="2.500" r="3" fill="#f04747" /></Icon>
      <Icon w={17} h={14} ml={7} sw={1.200}><path d="M.6 4.500H3L6.500 1v12L3 9.500H.6zM9 5q1.300 2 0 4M11.500 3q2.500 4 0 8M14 1q4 6 0 12" /></Icon>
      <Cone w={14} h={16} ml={9} />
      <Icon w={16} ml={9} sw={1.200}><rect width="16" height="16" rx="2.500" fill="#7c3fd8" stroke="none" /><rect x="6" y="2.500" width="4" height="7" rx="2" fill="#fff" stroke="none" /><path d="M4 7.500a4 4 0 0 0 8 0M8 11.500v2M5.500 13.500h5" stroke="#fff" /></Icon>
      <Icon w={17} h={14} ml={7} sw={1.200}><path d="M4 11.500Q.5 11 .7 8.500.9 6.500 3 6q0-3.500 3.500-4 3-.3 4.500 2.500 3 0 3.300 2.500 2 .5 2 2.500-.3 2-2.500 2z" fill="#a9a7a9" /><path d="M1.500 1l14 12" strokeWidth="1.500" /></Icon>
      <Icon w={16} h={14} ml={8} sw={1.200}><path d="M5 2.500h10.500v8H5M10 10.500v3M6.500 13.500h7M3 4v8M1 1h4v3H1zM3 12h3" /></Icon>
      <Icon w={12} h={16} ml={9} sw={1.200}><rect x="3" y="0" width="6" height="10.500" rx="1" {...solid} /><path d="M.8 7v3.500q0 2 2 2h6.400q2 0 2-2V7M6 13v3M3.500 15.500h5" /></Icon>
      <Icon w={12} h={16} ml={13} sw={1.200}><rect x=".8" y="5" width="7" height="6.500" rx="1.500" /><path d="M7.800 7.500L11 5.800v5L7.800 9M2 2q3.500-2.500 7 0M2 14.500q3.500 2.500 7 0" /></Icon>
      <Clock>
        <Text w={26} $s={11.500} $lh={18}>14:25</Text>
        <Text w={58} $s={11.500} $lh={18}>02/02/2022</Text>
      </Clock>
      <Notify>
        <Icon w={16} h={16} mt={4}><path d="M0 0h16v12H7l-3 3.500V12H0z" {...solid} /><path d="M3 3.500h10M3 6h10M3 8.500h7" stroke="#ddd" strokeWidth="1" /></Icon>
        <Count><Text w={7} $s={12} $lh={15}>2</Text></Count>
      </Notify>
      <ShowDesktop />
    </Taskbar>
  );
}

export default function App() {
  return (
    <Page>
      <Global />
      <Browser />
      <Main>
        <Stage>
          <StageTop>
            <RecBadge>
              <Dot $s={6} $c="#e02828" />
              <Text w={20} ml={3} $s={9.500} $b={700} $c="#b5b5b5">REC</Text>
            </RecBadge>
            <Banner>
              <Text w={418} $s={14.500} $c="#1d3a28" $lh={22}>You are viewing SLIIT ACADEMY MEETING ROOM 02's screen</Text>
              <Dot $s={6} $c="#f85b4e" $ml={17} />
              <Text w={20} ml={6} $s={9.500} $b={700} $c="#1d3a28">REC</Text>
            </Banner>
            <ViewOptions>
              <Text w={93} $s={14.500} $c="#fff" $lh={20}>View Options</Text>
              <Icon w={12} h={6} ml={4} mt={-1} color="#fff" sw={1.800}><path d="M.8.800L6 5 11.200.800" /></Icon>
            </ViewOptions>
          </StageTop>
          <Reader />
          <Talking><Text w={244} $s={12.500} $c="#fff" $lh={18}>Talking: SLIIT ACADEMY MEETING ROOM</Text></Talking>
        </Stage>
        <ChatPanel />
        <Edge />
      </Main>
      <TaskbarRow />
    </Page>
  );
}
